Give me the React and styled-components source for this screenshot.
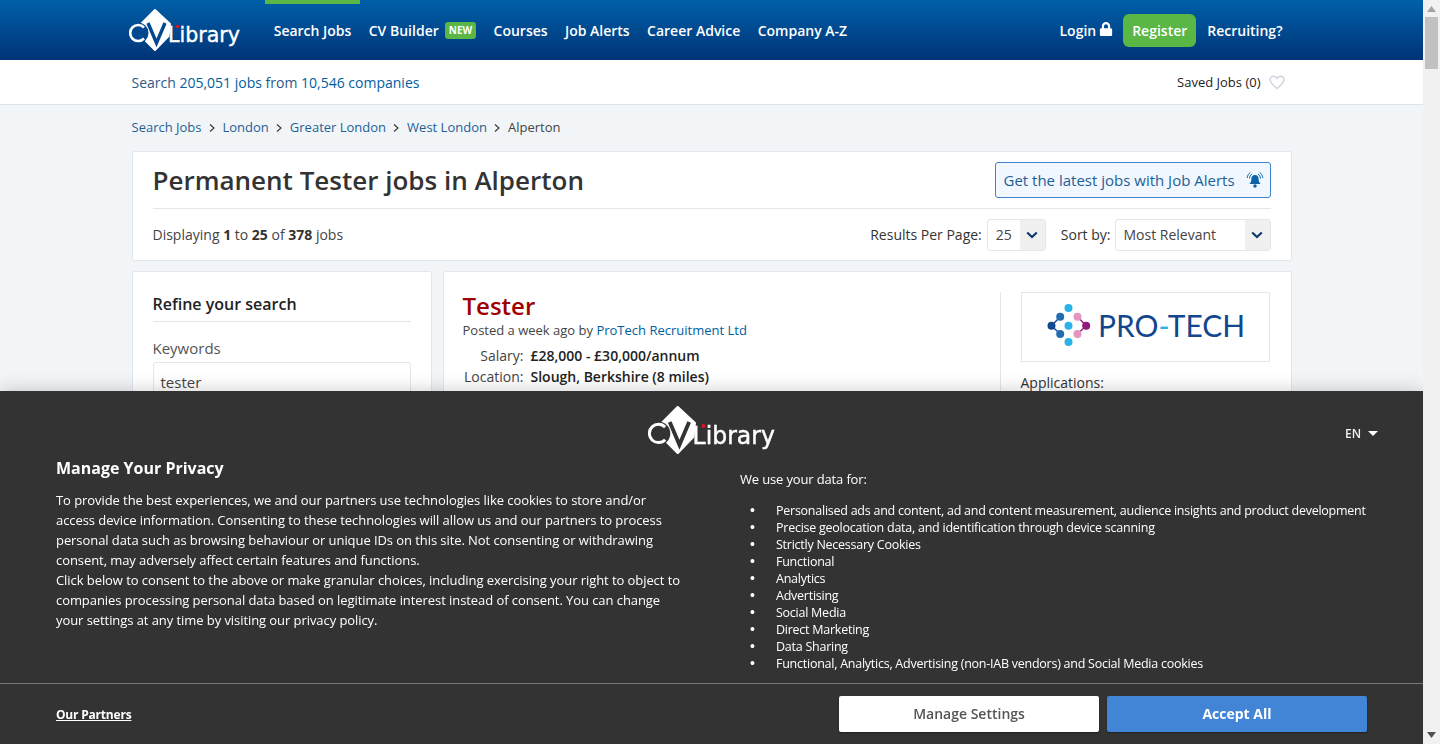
import React from 'react'
import styled, { createGlobalStyle } from 'styled-components'
import { FaLock } from 'react-icons/fa'

const GlobalStyle = createGlobalStyle`
  html, body {
    margin: 0;
    height: 744px;
    overflow: hidden;
    background: #f1f5f8;
    font-family: "Open Sans", "Liberation Sans", sans-serif;
    color: #333;
  }
  a { text-decoration: none; color: inherit; }
`

const Page = styled.div`
  width: 1423px;
  height: 744px;
  overflow: hidden;
`

const Header = styled.header`
  height: 60px;
  background: linear-gradient(#0060a9, #003376);
`

const Wrap = styled.div`
  width: 1160px;
  margin: 0 auto;
  display: flex;
  align-items: center;
`

const HeaderInner = styled(Wrap)`
  height: 60px;
`

const LogoLink = styled.a`
  display: block;
  width: 116px;
  height: 42px;
  margin: 0 20.5px 0 -3px;
  flex: none;
`

const NavItem = styled.a`
  height: 60px;
  box-sizing: border-box;
  padding: 0 8.7px 4px;
  display: flex;
  align-items: center;
  gap: 6px;
  font-size: 14px;
  font-weight: 600;
  color: #fff;
  border-top: 4px solid ${p => (p.$active ? '#5ab645' : 'transparent')};
`

const NewBadge = styled.span`
  background: #5ab645;
  border-radius: 3px;
  font-size: 10px;
  font-weight: 700;
  line-height: 17px;
  padding: 0 4px;
  color: #fff;
`

const NavRight = styled.div`
  margin-left: auto;
  margin-right: 9px;
  display: flex;
  align-items: center;
  gap: 10px;
`

const TopLink = styled.a`
  display: flex;
  align-items: center;
  gap: 3px;
  font-size: 14px;
  font-weight: 600;
  color: #fff;
  svg { margin-top: -3px; }
`

const RegisterButton = styled.a`
  width: 73px;
  height: 33px;
  border-radius: 6px;
  background: #5ab645;
  display: flex;
  align-items: center;
  justify-content: center;
  font-size: 14px;
  font-weight: 600;
  color: #fff;
  margin-right: 1px;
`

const SubHeader = styled.div`
  height: 44px;
  background: #fff;
  border-bottom: 1px solid #dde2e8;
`

const SubInner = styled(Wrap)`
  height: 44px;
  justify-content: space-between;
  font-size: 14px;
  color: #2d5a85;
`

const JobLink = styled.a`
  color: #00609f;
`

const Saved = styled.div`
  display: flex;
  align-items: center;
  gap: 8px;
  font-size: 13px;
  color: #222;
  margin-right: 7px;
`

const Breadcrumbs = styled(Wrap)`
  height: 46px;
  box-sizing: border-box;
  padding-bottom: 2px;
  font-size: 13px;
  color: #444;
`

const Crumb = styled.a`
  color: #1f5f96;
`

const CrumbSep = styled.svg`
  width: 6px;
  height: 8px;
  margin: 1px 8px 0 7px;
`

const Card = styled.section`
  box-sizing: border-box;
  background: #fff;
  border: 1px solid #e3e7eb;
  border-radius: 3px;
`

const TitleCard = styled(Card)`
  width: 1160px;
  height: 110px;
  margin: 0 auto;
  padding: 0 20px;
`

const TitleRow = styled.div`
  height: 56px;
  display: flex;
  align-items: center;
  justify-content: space-between;
  border-bottom: 1px solid #e3e7eb;
`

const Title = styled.h1`
  margin: 0;
  font-size: 26px;
  font-weight: 600;
  color: #333;
`

const AlertButton = styled.a`
  box-sizing: border-box;
  width: 276px;
  height: 36px;
  border: 1px solid #3f83cc;
  border-radius: 3px;
  background: #f0f7ff;
  color: #1f5f96;
  font-size: 15px;
  display: flex;
  align-items: center;
  justify-content: space-between;
  padding: 0 6px 0 8px;
`

const ControlRow = styled.div`
  height: 52px;
  display: flex;
  align-items: center;
  font-size: 14px;
  color: #444;
  b { font-weight: 700; color: #333; }
`

const Controls = styled.div`
  margin-left: auto;
  display: flex;
  align-items: center;
  color: #333;
`

const Label = styled.span`
  margin-right: ${p => p.$gap}px;
  margin-top: -2px;
`

const Select = styled.div`
  box-sizing: border-box;
  width: ${p => p.$width}px;
  height: 32px;
  margin-right: ${p => p.$gap || 0}px;
  border: 1px solid #e3e7eb;
  border-radius: 3px;
  display: flex;
  align-items: center;
  justify-content: space-between;
  padding-left: 8px;
  color: #444;
  overflow: hidden;
`

const SelectText = styled.span`
  margin-top: -1px;
`

const SelectArrow = styled.span`
  width: 25px;
  height: 100%;
  background: #f0f0f0;
  display: flex;
  align-items: center;
  justify-content: center;
`

const Summary = styled.span`
  margin-top: -2px;
`

const Columns = styled.div`
  width: 1160px;
  margin: 10px auto 0;
  display: flex;
  gap: 11px;
`

const Sidebar = styled(Card)`
  width: 300px;
  height: 400px;
  flex: none;
  padding: 20px;
`

const SideTitle = styled.h2`
  margin: 0;
  padding-bottom: 5px;
  font-size: 16px;
  line-height: 24px;
  font-weight: 600;
  color: #222;
  border-bottom: 1px solid #e3e7eb;
`

const FieldLabel = styled.div`
  margin-top: 15px;
  font-size: 15px;
  line-height: 22px;
  color: #555;
`

const FieldInput = styled.div`
  box-sizing: border-box;
  height: 40px;
  margin-top: 3px;
  border: 1px solid #e3e7eb;
  border-radius: 3px;
  padding: 8px 7px;
  font-size: 15px;
  line-height: 22px;
  color: #444;
`

const JobCard = styled(Card)`
  flex: 1;
  height: 400px;
  padding: 20px 21px 0 19px;
  display: flex;
`

const JobMain = styled.div`
  flex: 1;
  border-right: 1px solid #e3e7eb;
`

const JobTitle = styled.a`
  display: block;
  margin: -1px 0 2px;
  font-size: 24px;
  line-height: 29px;
  font-weight: 600;
  color: #a00000;
`

const Posted = styled.div`
  font-size: 13px;
  line-height: 17px;
  color: #444;
`

const Facts = styled.dl`
  margin: 6px 0 0;
  display: grid;
  grid-template-columns: 61px auto;
  column-gap: 7px;
  font-size: 14px;
  line-height: 21px;
  dt { text-align: right; color: #444; white-space: nowrap; }
  dd { margin: 0; font-weight: 600; color: #222; }
`

const JobSide = styled.div`
  width: 249px;
  margin-left: 20px;
  flex: none;
  font-size: 14px;
  color: #333;
`

const LogoBox = styled.div`
  box-sizing: border-box;
  height: 70px;
  margin-bottom: 11px;
  padding-left: 24px;
  border: 1px solid #e3e7eb;
  display: flex;
  align-items: center;
`

const Scrollbar = styled.div`
  position: fixed;
  top: 0;
  right: 0;
  width: 17px;
  height: 744px;
  background: #f1f1f1;
`

const ScrollThumb = styled.div`
  position: absolute;
  top: 17px;
  left: 2px;
  width: 13px;
  height: 52px;
  background: #c1c1c1;
`

const ScrollArrow = styled.svg`
  position: absolute;
  left: 4px;
  width: 9px;
  height: 6px;
  ${p => (p.$down ? 'bottom: 6px;' : 'top: 6px;')}
`

const Banner = styled.div`
  position: fixed;
  left: 0;
  bottom: 0;
  width: 1423px;
  height: 353px;
  background: #333;
  color: #fff;
  box-shadow: 0 0 18px rgba(0, 0, 0, 0.2);
  display: flex;
  flex-direction: column;
`

const BannerTop = styled.div`
  position: relative;
  height: 64px;
  padding: 15px 0 0 4.6px;
  box-sizing: border-box;
  display: flex;
  justify-content: center;
`

const Lang = styled.div`
  position: absolute;
  top: 34px;
  left: 1345px;
  display: flex;
  align-items: center;
  gap: 7px;
  font-size: 12px;
  font-weight: 600;
  color: #eee;
`

const LangCaret = styled.span`
  border-left: 5px solid transparent;
  border-right: 5px solid transparent;
  border-top: 5px solid #fff;
`

const BannerBody = styled.div`
  flex: 1;
  display: flex;
  padding-left: 56px;
`

const PrivacyCol = styled.div`
  width: 684px;
  flex: none;
`

const PrivacyTitle = styled.h2`
  margin: 0 0 9px;
  font-size: 16px;
  line-height: 26px;
  font-weight: 700;
`

const PrivacyText = styled.p`
  margin: 0;
  width: 628px;
  font-size: 13px;
  line-height: 20px;
  font-weight: 500;
  letter-spacing: -0.07px;
`

const UsageCol = styled.div`
  flex: 1;
  padding-top: 16px;
  font-size: 13px;
  font-weight: 500;
`

const UsageHead = styled.div`
  line-height: 17px;
  margin-bottom: 14px;
  letter-spacing: -0.15px;
`

const UsageList = styled.ul`
  margin: 0;
  padding: 0 0 0 10px;
  list-style: none;
  font-size: 12.5px;
  letter-spacing: -0.25px;
`

const UsageItem = styled.li`
  display: flex;
  line-height: 17px;
  &::before {
    content: '•';
    width: 26px;
    flex: none;
    font-family: "Liberation Sans", sans-serif;
    font-size: 14px;
  }
`

const BannerFoot = styled.div`
  box-sizing: border-box;
  height: 61px;
  border-top: 1px solid #777;
  padding: 0 56px;
  display: flex;
  align-items: center;
  gap: 8px;
`

const PartnersLink = styled.a`
  margin-right: auto;
  font-size: 12px;
  font-weight: 700;
  color: #fff;
  text-decoration: underline;
  letter-spacing: -0.2px;
`

const FootButton = styled.button`
  width: 260px;
  height: 36px;
  padding: 0 0 2px;
  border: 0;
  border-radius: 2px;
  font-family: inherit;
  font-size: 14px;
  font-weight: ${p => (p.$primary ? 700 : 600)};
  background: ${p => (p.$primary ? '#4285d6' : '#fff')};
  color: ${p => (p.$primary ? '#fff' : '#555')};
  box-shadow: 0 1px 2px rgba(0, 0, 0, 0.4);
`

// fill is the colour behind the logo, the C halo and the V are cut out with it
const CvLogo = ({ width = 116, height = 42, fill }) => (
  <svg width={width} height={height} viewBox="0 0 116 42">
    <path d="M26 1 L41 15 L39.500 27 L26 41 L6 21 z" fill="#fff" stroke="#fff" strokeWidth="2" strokeLinejoin="round" />
    <circle cx="9" cy="24" r="10.500" fill={fill} />
    <path d="M15 18.500 A8 8 0 1 0 15 29.500" fill="none" stroke="#fff" strokeWidth="2.600" />
    <path d="M19 14 L27.500 34 L36 14" fill="none" stroke={fill} strokeWidth="3.400" />
    <text x="39" y="33" fontFamily="'DejaVu Sans', sans-serif" fontSize="21" fill="#fff" stroke="#fff" strokeWidth="0.4" textLength="72" lengthAdjust="spacingAndGlyphs">Library</text>
    <circle cx="48.500" cy="17.500" r="1.700" fill="#e1141e" />
  </svg>
)

const ProTechLogo = () => (
  <svg width="210" height="46" viewBox="0 0 210 46">
    <path d="M5.500 21.700 L14.200 12.700 M5.500 21.700 L14.200 30" stroke="#12488f" strokeWidth="1.400" fill="none" />
    <path d="M31.500 12.700 L40.200 21.700 L31.500 30" stroke="#8e1a7c" strokeWidth="1.400" fill="none" />
    <circle cx="5.500" cy="21.700" r="4" fill="#12488f" />
    <circle cx="14.200" cy="12.700" r="4" fill="#1f6cb0" />
    <circle cx="14.200" cy="30" r="4" fill="#1f6cb0" />
    <circle cx="22.500" cy="4" r="4" fill="#29b3e8" />
    <circle cx="22.500" cy="21.700" r="4" fill="#29b3e8" />
    <circle cx="22.500" cy="38" r="4" fill="#29b3e8" />
    <circle cx="31.500" cy="12.700" r="4" fill="#e294c2" />
    <circle cx="31.500" cy="30" r="4" fill="#e294c2" />
    <circle cx="40.200" cy="21.700" r="4" fill="#8e1a7c" />
    <text x="52" y="32.700" fontFamily="Lato, sans-serif" fontSize="31" fill="#12478f" textLength="147" lengthAdjust="spacingAndGlyphs">PRO<tspan fill="#29b3e8">-</tspan>TECH</text>
  </svg>
)

const BellIcon = () => (
  <svg width="18" height="18" viewBox="0 0 18 18">
    <path d="M9 4c-2.600 0-3.700 2-3.700 4.600 0 2.300-.9 3.400-1.800 4.400h11c-.9-1-1.800-2.100-1.800-4.400C12.700 6 11.600 4 9 4z" fill="#0d63a8" />
    <circle cx="9" cy="15" r="1.700" fill="#0d63a8" />
    <path d="M3.500 7.500C3.700 5.500 4.500 4 6 3M14.500 7.500C14.300 5.500 13.500 4 12 3M1.200 7C1.500 4.500 2.500 2.700 4.300 1.400M16.800 7C16.500 4.500 15.500 2.700 13.700 1.400" fill="none" stroke="#0d63a8" strokeWidth="1" />
  </svg>
)

const HeartIcon = () => (
  <svg width="16" height="15" viewBox="0 0 16 15">
    <path d="M8 13.500C4 10.200 1 7.800 1 4.800 1 2.700 2.600 1.200 4.500 1.200 5.900 1.200 7.200 2 8 3.400 8.800 2 10.100 1.200 11.500 1.200 13.400 1.200 15 2.700 15 4.800 15 7.800 12 10.200 8 13.500z" fill="none" stroke="#cdd3e0" strokeWidth="1.400" />
  </svg>
)

const Chevron = () => (
  <svg width="12" height="8" viewBox="0 0 12 8">
    <path d="M1.200 1.500 L6 6 L10.800 1.500" fill="none" stroke="#12376e" strokeWidth="2.200" />
  </svg>
)

const Sep = () => (
  <CrumbSep viewBox="0 0 6 8">
    <path d="M1 .5 L5 4 L1 7.500" fill="none" stroke="#333" strokeWidth="1.100" />
  </CrumbSep>
)

const navItems = ['CV Builder', 'Courses', 'Job Alerts', 'Career Advice', 'Company A-Z']
const crumbs = ['Search Jobs', 'London', 'Greater London', 'West London']
const usage = [
  'Personalised ads and content, ad and content measurement, audience insights and product development',
  'Precise geolocation data, and identification through device scanning',
  'Strictly Necessary Cookies',
  'Functional',
  'Analytics',
  'Advertising',
  'Social Media',
  'Direct Marketing',
  'Data Sharing',
  'Functional, Analytics, Advertising (non-IAB vendors) and Social Media cookies',
]

export default function App() {
  return (
    <Page>
      <GlobalStyle />
      <Header>
        <HeaderInner>
          <LogoLink><CvLogo fill="#00488f" /></LogoLink>
          <NavItem $active>Search Jobs</NavItem>
          {navItems.map(item => (
            <NavItem key={item}>
              {item}
              {item === 'CV Builder' && <NewBadge>NEW</NewBadge>}
            </NavItem>
          ))}
          <NavRight>
            <TopLink>Login <FaLock size={14} /></TopLink>
            <RegisterButton>Register</RegisterButton>
            <TopLink>Recruiting?</TopLink>
          </NavRight>
        </HeaderInner>
      </Header>
      <SubHeader>
        <SubInner>
          <span>Search <JobLink>205,051 jobs</JobLink> from <JobLink>10,546 companies</JobLink></span>
          <Saved>Saved Jobs (0) <HeartIcon /></Saved>
        </SubInner>
      </SubHeader>
      <Breadcrumbs>
        {crumbs.map(c => (
          <React.Fragment key={c}>
            <Crumb>{c}</Crumb>
            <Sep />
          </React.Fragment>
        ))}
        Alperton
      </Breadcrumbs>
      <TitleCard>
        <TitleRow>
          <Title>Permanent Tester jobs in Alperton</Title>
          <AlertButton>Get the latest jobs with Job Alerts <BellIcon /></AlertButton>
        </TitleRow>
        <ControlRow>
          <Summary>Displaying <b>1</b> to <b>25</b> of <b>378</b> jobs</Summary>
          <Controls>
            <Label $gap={5}>Results Per Page:</Label>
            <Select $width={59} $gap={15}><SelectText>25</SelectText><SelectArrow><Chevron /></SelectArrow></Select>
            <Label $gap={4}>Sort by:</Label>
            <Select $width={156}><SelectText>Most Relevant</SelectText><SelectArrow><Chevron /></SelectArrow></Select>
          </Controls>
        </ControlRow>
      </TitleCard>
      <Columns>
        <Sidebar>
          <SideTitle>Refine your search</SideTitle>
          <FieldLabel>Keywords</FieldLabel>
          <FieldInput>tester</FieldInput>
        </Sidebar>
        <JobCard>
          <JobMain>
            <JobTitle>Tester</JobTitle>
            <Posted>Posted a week ago by <JobLink>ProTech Recruitment Ltd</JobLink></Posted>
            <Facts>
              <dt>Salary:</dt><dd>£28,000 - £30,000/annum</dd>
              <dt>Location:</dt><dd>Slough, Berkshire (8 miles)</dd>
            </Facts>
          </JobMain>
          <JobSide>
            <LogoBox><ProTechLogo /></LogoBox>
            Applications:
          </JobSide>
        </JobCard>
      </Columns>
      <Banner>
        <BannerTop>
          <CvLogo width={132.6} height={48} fill="#333" />
          <Lang>EN <LangCaret /></Lang>
        </BannerTop>
        <BannerBody>
          <PrivacyCol>
            <PrivacyTitle>Manage Your Privacy</PrivacyTitle>
            <PrivacyText>
              To provide the best experiences, we and our partners use technologies like cookies to store and/or access device information. Consenting to these technologies will allow us and our partners to process personal data such as browsing behaviour or unique IDs on this site. Not consenting or withdrawing consent, may adversely affect certain features and functions.
            </PrivacyText>
            <PrivacyText>
              Click below to consent to the above or make granular choices, including exercising your right to object to companies processing personal data based on legitimate interest instead of consent. You can change your settings at any time by visiting our privacy policy.
            </PrivacyText>
          </PrivacyCol>
          <UsageCol>
            <UsageHead>We use your data for:</UsageHead>
            <UsageList>
              {usage.map(u => <UsageItem key={u}>{u}</UsageItem>)}
            </UsageList>
          </UsageCol>
        </BannerBody>
        <BannerFoot>
          <PartnersLink>Our Partners</PartnersLink>
          <FootButton>Manage Settings</FootButton>
          <FootButton $primary>Accept All</FootButton>
        </BannerFoot>
      </Banner>
      <Scrollbar>
        <ScrollArrow viewBox="0 0 9 6"><path d="M4.500 0 L9 6 H0 z" fill="#a3a3a3" /></ScrollArrow>
        <ScrollThumb />
        <ScrollArrow $down viewBox="0 0 9 6"><path d="M0 0 H9 L4.500 6 z" fill="#505050" /></ScrollArrow>
      </Scrollbar>
    </Page>
  )
}
